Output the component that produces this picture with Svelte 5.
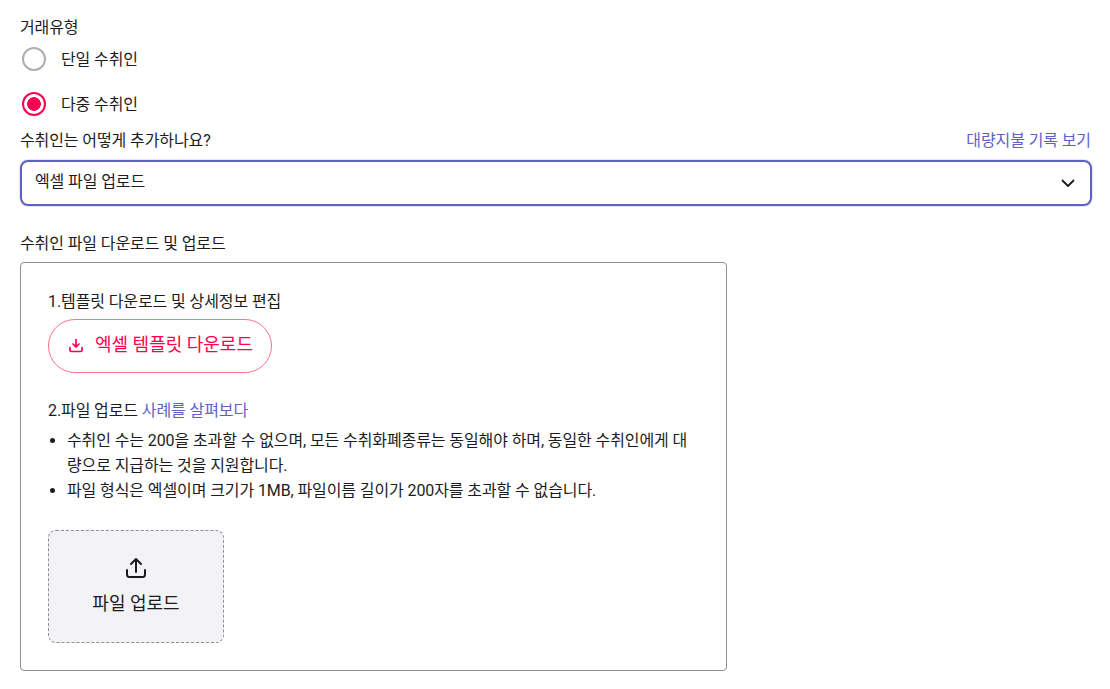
<script>
  const tips = [
    '수취인 수는 200을 초과할 수 없으며, 모든 수취화폐종류는 동일해야 하며, 동일한 수취인에게 대량으로 지급하는 것을 지원합니다.',
    '파일 형식은 엑셀이며 크기가 1MB, 파일이름 길이가 200자를 초과할 수 없습니다.'
  ];
</script>

<div class="page">
  <div class="label first">거래유형</div>
  <div class="radios">
    <div class="radio-row">
      <span class="radio"></span>
      <span class="radio-text">단일 수취인</span>
    </div>
    <div class="radio-row">
      <span class="radio checked"></span>
      <span class="radio-text">다중 수취인</span>
    </div>
  </div>
  <div class="label-row">
    <span>수취인는 어떻게 추가하나요?</span>
    <span class="link">대량지불 기록 보기</span>
  </div>
  <div class="select">
    <span>엑셀 파일 업로드</span>
    <svg width="16" height="16" viewBox="0 0 16 16" fill="none"><path d="M2.500 5.500 8 11l5.500-5.500" stroke="#1c1c1e" stroke-width="1.8" stroke-linecap="round" stroke-linejoin="round"/></svg>
  </div>
  <div class="label second">수취인 파일 다운로드 및 업로드</div>
  <div class="card">
    <div class="step">1.템플릿 다운로드 및 상세정보 편집</div>
    <div class="dl-btn">
      <svg width="16" height="16" viewBox="0 0 16 16" fill="none" stroke="#ff0050" stroke-width="1.7" stroke-linecap="round" stroke-linejoin="round"><path d="M8 2.500v7.500M5 7 8 10l3-3"/><path d="M1.900 10.500v2.500c0 1 .6 1.500 1.500 1.500h9.200c.9 0 1.500-.5 1.500-1.500v-2.500"/></svg>
      <span>엑셀 템플릿 다운로드</span>
    </div>
    <div class="step two">2.파일 업로드 <span class="link">사례를 살펴보다</span></div>
    <ul>
      {#each tips as tip}
        <li>{tip}</li>
      {/each}
    </ul>
    <div class="upload">
      <svg width="24" height="24" viewBox="0 0 24 24" fill="none" stroke="#1c1c1e" stroke-width="2" stroke-linecap="round" stroke-linejoin="round"><path d="M12 16V3M7 8l5-5 5 5"/><path d="M3 14v4.500c0 1.500 1 2.500 2.500 2.500h13c1.500 0 2.500-1 2.500-2.500V14"/></svg>
      <span>파일 업로드</span>
    </div>
  </div>
</div>

<style>
  :global(body) {
    margin: 0;
    background: #fff;
  }
  .page {
    box-sizing: border-box;
    width: 1110px;
    padding: 18px 19px 0 20px;
    font-family: Roboto, "Noto Sans CJK KR", sans-serif;
    font-size: 16px;
    letter-spacing: -0.1px;
    line-height: 20px;
    color: #1c1c1e;
  }
  .radios {
    display: flex;
    flex-direction: column;
    gap: 21px;
    margin-top: 9px;
  }
  .radio-row {
    display: flex;
    align-items: center;
    gap: 15px;
    height: 24px;
    padding-left: 2px;
  }
  .radio-text {
    padding-top: 2px;
  }
  .radio {
    box-sizing: border-box;
    width: 24px;
    height: 24px;
    border: 2px solid #aeaeb2;
    border-radius: 50%;
    background: #fff;
  }
  .radio.checked {
    border-color: #ff0050;
    background: radial-gradient(circle, #ff0050 0 6.500px, #fff 7.100px);
  }
  .label-row {
    display: flex;
    justify-content: space-between;
    align-items: center;
    margin-top: 15px;
    margin-bottom: 9px;
  }
  .link {
    color: #5f5fc4;
  }
  .select {
    box-sizing: border-box;
    display: flex;
    justify-content: space-between;
    align-items: center;
    height: 46px;
    margin-right: -1px;
    padding: 0 14px 2px 13px;
    border: 2px solid #5f5fc4;
    border-radius: 8px;
    box-shadow: 0 0 0 1px #e6e6f5;
  }
  .select svg {
    margin-top: 2px;
  }
  .label.second {
    margin-top: 28px;
    margin-bottom: 8px;
  }
  .card {
    box-sizing: border-box;
    width: 707px;
    height: 409px;
    padding: 29px 27px 0;
    border: 1px solid #8e8e93;
    border-radius: 4px;
  }
  .dl-btn {
    box-sizing: border-box;
    display: flex;
    align-items: center;
    gap: 11px;
    width: 224px;
    height: 54px;
    margin-top: 7px;
    padding: 0 0 2px 19px;
    border: 1px solid #ff6f8f;
    border-radius: 27px;
    color: #ff0050;
    font-size: 18px;
    letter-spacing: 0;
  }
  .step.two {
    margin-top: 28px;
  }
  ul {
    margin: 7px 0 0;
    padding: 0 0 0 19px;
    line-height: 25px;
  }
  .upload {
    box-sizing: border-box;
    display: flex;
    flex-direction: column;
    align-items: center;
    gap: 14px;
    width: 176px;
    height: 113px;
    margin-top: 27px;
    padding-top: 25px;
    border: 1px dashed #8e8e93;
    border-radius: 8px;
    background: #f2f2f7;
    font-size: 18px;
    letter-spacing: 0;
  }
</style>
